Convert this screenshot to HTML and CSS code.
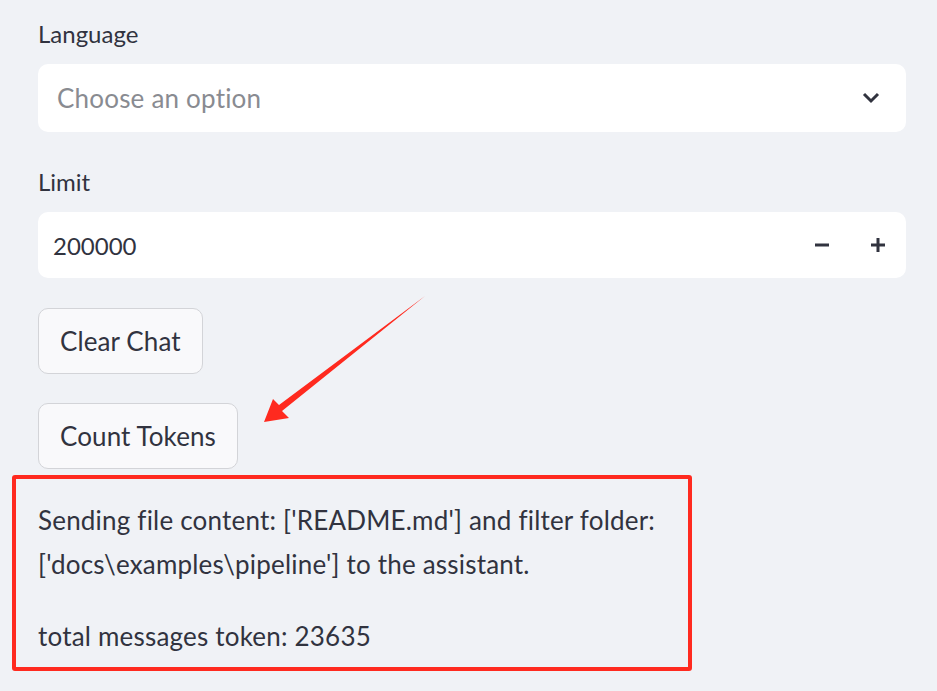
FILE: index.html
```html
<!DOCTYPE html>
<html lang="en">
<head>
<meta charset="utf-8">
<title>Sidebar</title>
<link rel="stylesheet" href="styles.css">
</head>
<body>
<main class="panel">
  <div class="widget">
    <label class="label">Language</label>
    <div class="select">
      <span class="placeholder">Choose an option</span>
      <svg class="chevron" width="18" height="12" viewBox="0 0 18 12"><path d="M2 2 L9 9 L16 2" fill="none" stroke="#31333f" stroke-width="3"/></svg>
    </div>
  </div>
  <div class="widget widget-limit">
    <label class="label">Limit</label>
    <div class="number">
      <span class="value">200000</span>
      <div class="steppers">
        <svg class="step" width="16" height="16" viewBox="0 0 16 16"><path d="M1 8 H15" stroke="#31333f" stroke-width="3"/></svg>
        <svg class="step" width="16" height="16" viewBox="0 0 16 16"><path d="M1 8 H15 M8 1 V15" stroke="#31333f" stroke-width="3"/></svg>
      </div>
    </div>
  </div>
  <div class="buttons">
    <button class="btn">Clear Chat</button>
    <button class="btn">Count Tokens</button>
  </div>
  <div class="output">
    <p>Sending file content: ['README.md'] and filter folder: ['docs\examples\pipeline'] to the assistant.</p>
    <p>total messages token: 23635</p>
  </div>
</main>
<svg class="arrow" width="937" height="691" viewBox="0 0 937 691">
  <polygon points="264,422 273,399 279,405 425,296 282,411 289,418" fill="#ff2a1f"/>
</svg>
</body>
</html>
```
FILE: styles.css
```css
html, body {
  margin: 0;
  padding: 0;
  background: #f0f2f6;
}
body {
  width: 937px;
  height: 691px;
  overflow: hidden;
  position: relative;
  font-family: Lato, "Noto Sans", sans-serif;
  color: #31333f;
}
.panel {
  padding: 19px 31px 0 38px;
  display: flex;
  flex-direction: column;
}
.widget {
  display: flex;
  flex-direction: column;
}
.widget-limit {
  margin-top: 35px;
}
.label {
  font-size: 24px;
  line-height: 30px;
  margin-bottom: 15px;
}
.select {
  height: 68px;
  background: #ffffff;
  border-radius: 10px;
  display: flex;
  align-items: center;
  padding: 0 26px 0 19px;
}
.placeholder {
  flex: 1;
  font-size: 26px;
  letter-spacing: 0.2px;
  line-height: 30px;
  color: #898b91;
}
.chevron {
  display: block;
}
.number {
  height: 66px;
  background: #ffffff;
  border-radius: 10px;
  display: flex;
  align-items: center;
  padding: 0 20px 0 15px;
}
.value {
  flex: 1;
  font-size: 24px;
  line-height: 30px;
  padding-top: 2px;
}
.steppers {
  display: flex;
  gap: 40px;
}
.step {
  display: block;
}
.buttons {
  display: flex;
  flex-direction: column;
  align-items: flex-start;
  gap: 29px;
  margin-top: 30px;
}
.btn {
  height: 66px;
  padding: 0 21px;
  font-family: inherit;
  font-size: 26px;
  letter-spacing: 0.1px;
  color: #31333f;
  background: #f9f9fb;
  border: 1px solid #d3d4d8;
  border-radius: 10px;
}
.output {
  margin: 6px 0 0 -26px;
  width: 680px;
  box-sizing: border-box;
  border: 4px solid #ff2a1f;
  border-radius: 3px;
  padding: 19px 20px 9px 22px;
}
.output p {
  margin: 0;
  font-size: 26px;
  letter-spacing: 0.2px;
  line-height: 44px;
}
.output p + p {
  margin-top: 28px;
}
.arrow {
  position: absolute;
  top: 0;
  left: 0;
  pointer-events: none;
}
```
